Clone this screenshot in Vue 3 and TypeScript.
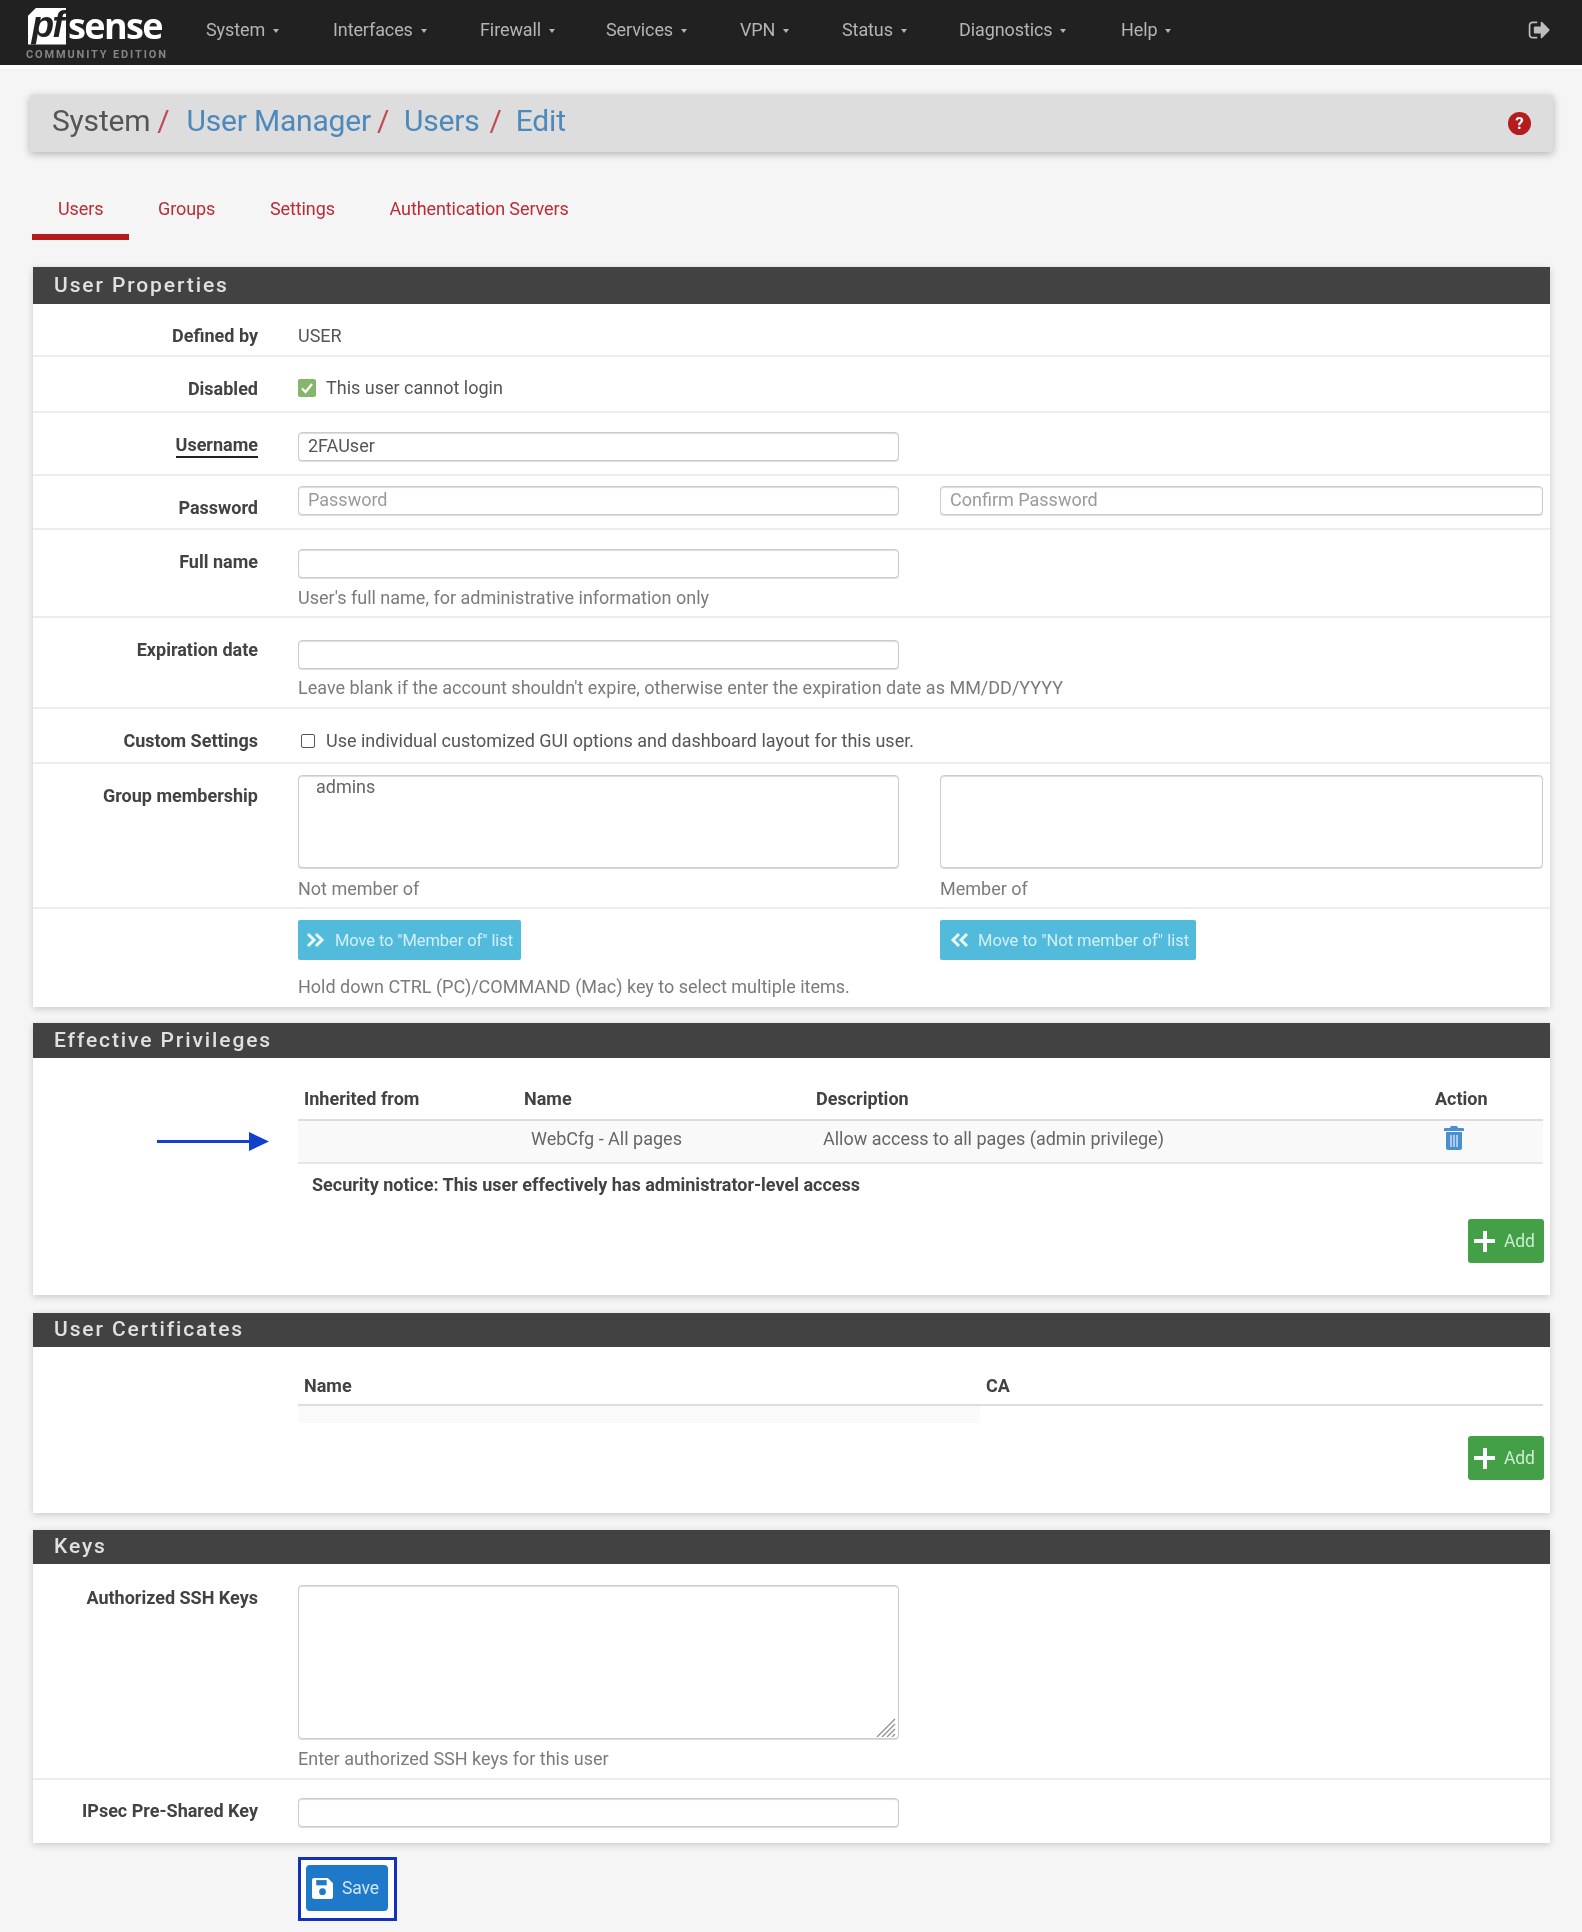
<script setup lang="ts">
const navItems: { label: string; width: number }[] = [
  { label: 'System', width: 127 },
  { label: 'Interfaces', width: 147 },
  { label: 'Firewall', width: 126 },
  { label: 'Services', width: 134 },
  { label: 'VPN', width: 102 },
  { label: 'Status', width: 117 },
  { label: 'Diagnostics', width: 162 },
  { label: 'Help', width: 80 },
]
const tabs = ['Users', 'Groups', 'Settings', 'Authentication Servers']
</script>

<template>
  <div class="page">
    <nav class="nav">
      <div class="brand">
        <div class="logo-row">
          <span class="pf">pf</span><span class="sense">sense</span>
        </div>
        <div class="edition">COMMUNITY EDITION</div>
      </div>
      <ul class="menu">
        <li v-for="item in navItems" :key="item.label" :style="{ width: item.width + 'px' }">
          {{ item.label }}<i class="caret"></i>
        </li>
      </ul>
      <svg class="logout" viewBox="0 0 1664 1792" aria-label="Logout">
        <path fill="#bdbdbd" d="M704 1440q0 4 1 20t.5 26.5-3 23.5-10 19.5-20.5 6.5h-320q-119 0-203.5-84.5t-84.5-203.5v-704q0-119 84.5-203.5t203.5-84.5h320q13 0 22.5 9.5t9.5 22.5q0 4 1 20t.5 26.5-3 23.5-10 19.5-20.5 6.5h-320q-66 0-113 47t-47 113v704q0 66 47 113t113 47h312l11.5 1 11.5 3 8 5.5 7 9 2 13.5zm928-544q0 26-19 45l-544 544q-19 19-45 19t-45-19-19-45v-288h-448q-26 0-45-19t-19-45v-384q0-26 19-45t45-19h448v-288q0-26 19-45t45-19 45 19l544 544q19 19 19 45z"/>
      </svg>
    </nav>

    <header class="crumbs">
      <span class="c-root">System</span><span class="c-sep c-sep-a">/</span>
      <a class="c-link">User Manager</a><span class="c-sep c-sep-b">/</span>
      <a class="c-link">Users</a><span class="c-sep c-sep-c">/</span>
      <a class="c-link">Edit</a>
      <span class="help-dot">?</span>
    </header>

    <div class="tabs">
      <a v-for="(t, i) in tabs" :key="t" class="tab" :class="{ active: i === 0 }">{{ t }}</a>
    </div>

    <section class="panel">
      <h2 class="panel-title first">User Properties</h2>
      <div class="row h53">
        <label class="lbl">Defined by</label>
        <div class="val pt-22">USER</div>
      </div>
      <div class="row h56">
        <label class="lbl">Disabled</label>
        <div class="check-line pt-21">
          <svg class="green-check" viewBox="0 0 18 18">
            <rect width="18" height="18" rx="2" fill="#86b66e"/>
            <path d="M4 9.5l3.5 3.5L14 5" fill="none" stroke="#fff" stroke-width="2.2"/>
          </svg>
          <span>This user cannot login</span>
        </div>
      </div>
      <div class="row h63">
        <label class="lbl"><span class="req">Username</span></label>
        <div class="pt-19"><input class="ctl" value="2FAUser" /></div>
      </div>
      <div class="row h54">
        <label class="lbl">Password</label>
        <div class="pt-10"><input class="ctl" placeholder="Password" /></div>
        <div class="pt-10 col2"><input class="ctl" placeholder="Confirm Password" /></div>
      </div>
      <div class="row h88">
        <label class="lbl">Full name</label>
        <div class="pt-19">
          <input class="ctl" />
          <p class="help m10">User's full name, for administrative information only</p>
        </div>
      </div>
      <div class="row h91">
        <label class="lbl">Expiration date</label>
        <div class="pt-22 span2">
          <input class="ctl ctl-narrow" />
          <p class="help m9">Leave blank if the account shouldn't expire, otherwise enter the expiration date as MM/DD/YYYY</p>
        </div>
      </div>
      <div class="row h55">
        <label class="lbl">Custom Settings</label>
        <div class="check-line pt-22 span2">
          <span class="empty-check"></span>
          <span>Use individual customized GUI options and dashboard layout for this user.</span>
        </div>
      </div>
      <div class="row h145">
        <label class="lbl">Group membership</label>
        <div class="pt-11">
          <select class="ctl list" multiple><option>admins</option></select>
          <p class="help m11">Not member of</p>
        </div>
        <div class="pt-11 col2">
          <select class="ctl list" multiple></select>
          <p class="help m11">Member of</p>
        </div>
      </div>
      <div class="row h98 last">
        <span></span>
        <div class="pt-11 btn-cell">
          <button class="btn info move-a" type="button">
            <svg class="chev" viewBox="0 0 20 16"><path d="M2 2l6 6-6 6M10 2l6 6-6 6" fill="none" stroke="#e8f7fb" stroke-width="3"/></svg>
            Move to "Member of" list
          </button>
        </div>
        <div class="pt-11 col2 btn-cell">
          <button class="btn info move-b" type="button">
            <svg class="chev" viewBox="0 0 20 16"><path d="M10 2L4 8l6 6M18 2l-6 6 6 6" fill="none" stroke="#e8f7fb" stroke-width="3"/></svg>
            Move to "Not member of" list
          </button>
        </div>
        <span></span>
        <p class="help hold span2">Hold down CTRL (PC)/COMMAND (Mac) key to select multiple items.</p>
      </div>
    </section>

    <section class="panel gap16">
      <h2 class="panel-title">Effective Privileges</h2>
      <div class="tbl-wrap priv">
        <svg class="arrow" viewBox="0 0 112 20">
          <rect x="0" y="8" width="94" height="3" fill="#1240cc"/>
          <path d="M92 0l20 9.5-20 9.5z" fill="#1240cc"/>
        </svg>
        <table class="tbl">
          <colgroup><col class="c1" /><col class="c2" /><col class="c3" /><col class="c4" /></colgroup>
          <thead>
            <tr><th>Inherited from</th><th>Name</th><th>Description</th><th>Action</th></tr>
          </thead>
          <tbody>
            <tr>
              <td></td>
              <td>WebCfg - All pages</td>
              <td>Allow access to all pages (admin privilege)</td>
              <td class="act">
                <svg class="trash" viewBox="0 0 20 24">
                  <path fill="#4a8fd0" d="M7 0h6l1 2h5a1 1 0 011 1v2H0V3a1 1 0 011-1h5zM2 6h16v16a2 2 0 01-2 2H4a2 2 0 01-2-2z"/>
                  <path stroke="#d5e5f5" stroke-width="1.4" d="M7 9v12M10 9v12M13 9v12"/>
                </svg>
              </td>
            </tr>
          </tbody>
        </table>
        <p class="notice">Security notice: This user effectively has administrator-level access</p>
        <div class="add-line add-a">
          <button class="btn add" type="button"><span class="plus"></span>Add</button>
        </div>
      </div>
    </section>

    <section class="panel gap18">
      <h2 class="panel-title short">User Certificates</h2>
      <div class="tbl-wrap cert">
        <table class="tbl">
          <colgroup><col class="cc1" /><col /></colgroup>
          <thead><tr><th>Name</th><th>CA</th></tr></thead>
        </table>
        <div class="strip"></div>
        <div class="add-line add-b">
          <button class="btn add" type="button"><span class="plus"></span>Add</button>
        </div>
      </div>
    </section>

    <section class="panel gap17">
      <h2 class="panel-title short">Keys</h2>
      <div class="row h216">
        <label class="lbl lbl-down">Authorized SSH Keys</label>
        <div class="pt-21">
          <div class="area-wrap">
            <textarea class="ctl area"></textarea>
            <svg class="grip" viewBox="0 0 20 20">
              <path d="M1 20L19 2M6 20L19 7M11 20l8-8M16 20l3-3" stroke="#8f8f8f" stroke-width="1.3" fill="none"/>
            </svg>
          </div>
          <p class="help m10">Enter authorized SSH keys for this user</p>
        </div>
      </div>
      <div class="row h63 last">
        <label class="lbl lbl-up">IPsec Pre-Shared Key</label>
        <div class="pt-18"><input class="ctl" /></div>
      </div>
    </section>

    <div class="save-wrap">
      <div class="save-mark">
        <button class="btn save" type="button">
          <svg class="floppy" viewBox="0 0 20 20">
            <path fill="#fff" d="M2 0h13l5 5v13a2 2 0 01-2 2H2a2 2 0 01-2-2V2a2 2 0 012-2z"/>
            <rect x="4" y="2" width="10" height="5" fill="#1e79c8"/>
            <circle cx="10" cy="13" r="3.2" fill="#1e79c8"/>
          </svg>
          Save
        </button>
      </div>
    </div>
  </div>
</template>

<style>
html, body { margin: 0; background: #f5f5f5; }
</style>

<style scoped>
.page {
  width: 1582px;
  min-height: 1932px;
  box-sizing: border-box;
  background: #f5f5f5;
  font-family: Roboto, "Liberation Sans", sans-serif;
  color: #555;
  overflow: hidden;
  filter: blur(0.5px);
}

/* nav */
.nav {
  display: flex;
  align-items: center;
  height: 65px;
  background: #212121;
  border-top: 1px solid #333;
  border-bottom: 4px solid #fff;
  box-sizing: content-box;
  margin-top: -1px;
}
.brand { width: 180px; margin-left: 26px; flex: none; }
.logo-row { display: flex; align-items: center; height: 38px; margin-top: 3px; }
.pf {
  display: block;
  width: 38px;
  height: 37px;
  margin-left: 2px;
  background: #fff;
  clip-path: polygon(22% 0, 100% 0, 100% 100%, 0 100%, 0 22%);
  color: #212121;
  font: italic 700 37px/34px "Liberation Sans", sans-serif;
  letter-spacing: -2px;
  text-align: center;
}
.sense {
  margin-left: 2px;
  color: #fff;
  font: 700 36px/38px "Open Sans", sans-serif;
  letter-spacing: -1.6px;
}
.edition {
  margin-top: 3px;
  color: #858585;
  font: 700 11px/13px Roboto, sans-serif;
  letter-spacing: 1.85px;
  white-space: nowrap;
}
.menu {
  display: flex;
  list-style: none;
  margin: 0;
  padding: 0;
  flex: 1;
  color: #b4b4b4;
  font-size: 18px;
  letter-spacing: -0.1px;
}
.menu li { flex: none; white-space: nowrap; margin-top: -7px; }
.caret {
  display: inline-block;
  margin-left: 8px;
  vertical-align: middle;
  border-top: 4px solid #b4b4b4;
  border-left: 3.5px solid transparent;
  border-right: 3.5px solid transparent;
}
.logout { width: 24px; height: 24px; margin-right: 31px; margin-top: -6px; flex: none; }

/* breadcrumb */
.crumbs {
  display: flex;
  align-items: center;
  height: 57px;
  margin: 26px 29px 0 30px;
  padding-left: 22px;
  padding-bottom: 6px;
  box-sizing: border-box;
  background: #ddd;
  box-shadow: 0 2px 8px rgba(0, 0, 0, 0.28);
  font-size: 30px;
  letter-spacing: -0.2px;
  color: #555;
}
.c-link { color: #4d89bb; }
.c-sep { color: #c24a55; }
.c-sep-a { margin: 0 17px 0 7px; }
.c-sep-b { margin: 0 15px 0 6px; }
.c-sep-c { margin: 0 14px 0 10px; }
.help-dot {
  width: 23px;
  height: 23px;
  margin-left: auto;
  margin-right: 22px;
  margin-top: 6px;
  border-radius: 50%;
  background: #b71c1c;
  color: #fff;
  font: 700 17px/23px Roboto, sans-serif;
  text-align: center;
  letter-spacing: 0;
}

/* tabs */
.tabs { display: flex; gap: 2.7px; margin: 38px 0 0 32px; height: 50px; }
.tab {
  box-sizing: border-box;
  height: 50px;
  padding: 9px 26px 0;
  color: #bb2c36;
  font-size: 18px;
  line-height: 20px;
  letter-spacing: -0.1px;
}
.tab.active { border-bottom: 6px solid #b71c1c; }

/* panels */
.panel {
  margin: 27px 32px 0 33px;
  background: #fff;
  box-shadow: 0 2px 7px rgba(0, 0, 0, 0.18);
}
.gap16 { margin-top: 16px; }
.gap18 { margin-top: 18px; }
.gap17 { margin-top: 17px; }
.panel-title {
  box-sizing: border-box;
  height: 35px;
  margin: 0;
  padding-left: 21px;
  background: #424242;
  color: #e0e0e0;
  font-size: 21px;
  font-weight: 500;
  line-height: 35px;
  letter-spacing: 1.9px;
}
.panel-title.first { height: 37px; line-height: 37px; }
.panel-title.short { height: 34px; line-height: 33px; }

/* rows */
.row {
  display: grid;
  grid-template-columns: 225px 601px 1fr;
  column-gap: 40px;
  padding-right: 7px;
  box-sizing: border-box;
  border-bottom: 2px solid #ececec;
  align-items: start;
  align-content: start;
}
.row.last { border-bottom: 0; }
.h53 { height: 53px; } .h56 { height: 56px; } .h63 { height: 63px; } .h54 { height: 54px; }
.h88 { height: 88px; } .h91 { height: 91px; } .h55 { height: 55px; } .h145 { height: 145px; }
.h98 { height: 98px; } .h216 { height: 216px; }
.pt-10 { padding-top: 10px; } .pt-11 { padding-top: 11px; } .pt-18 { padding-top: 18px; }
.pt-19 { padding-top: 19px; } .pt-21 { padding-top: 21px; } .pt-22 { padding-top: 22px; }
.col2 { margin-left: 1px; }
.span2 { grid-column: 2 / 4; }
.btn-cell { display: flex; }
.lbl {
  display: block;
  padding-top: 22px;
  text-align: right;
  color: #424242;
  font-size: 18px;
  font-weight: 700;
  line-height: 20px;
  white-space: nowrap;
}
.lbl-down { padding-top: 24px; }
.lbl-up { padding-top: 21px; }
.req { display: inline-block; height: 21px; border-bottom: 2px solid #222; }
.val, .check-line {
  color: #555;
  font-size: 18px;
  line-height: 20px;
}
.check-line { display: flex; align-items: center; }
.green-check { width: 18px; height: 18px; margin-right: 10px; flex: none; }
.empty-check {
  box-sizing: border-box;
  width: 14px;
  height: 14px;
  margin: 0 11px 0 3px;
  border: 1px solid #555;
  border-radius: 2px;
  background: #fff;
  flex: none;
}
.ctl {
  display: block;
  box-sizing: border-box;
  width: 100%;
  height: 29px;
  padding: 0 9px 2px;
  border: 1px solid #ccc;
  border-radius: 4px;
  outline: 0;
  background: #fff;
  box-shadow: inset 0 1px 1px rgba(0, 0, 0, 0.14), 0 1px 0 #ddd;
  color: #555;
  font-family: Roboto, "Liberation Sans", sans-serif;
  font-size: 18px;
}
.ctl::placeholder { color: #9a9a9a; opacity: 1; }
.ctl-narrow { width: 601px; }
.list { height: 93px; padding: 0 0 0 4px; overflow: hidden; }
.list option { padding: 0 13px; color: #666; }
.area-wrap { position: relative; }
.area { height: 154px; padding: 6px 10px; resize: none; }
.grip { position: absolute; right: 3px; bottom: 2px; width: 20px; height: 20px; }
.help {
  margin: 0;
  color: #7b7b7b;
  font-size: 18px;
  line-height: 20px;
  white-space: nowrap;
}
.m9 { margin-top: 9px; } .m10 { margin-top: 10px; } .m11 { margin-top: 11px; }
.hold { margin-top: 17px; }

/* buttons */
.btn {
  display: inline-flex;
  align-items: center;
  box-sizing: border-box;
  border: 0;
  color: #d2f0f8;
  font-family: Roboto, "Liberation Sans", sans-serif;
  font-size: 16.5px;
  letter-spacing: -0.1px;
  padding: 0;
  white-space: nowrap;
}
.info { height: 40px; background: #52bbdb; border-radius: 2px; }
.move-a { width: 223px; padding-left: 8px; }
.move-b { width: 256px; padding-left: 9px; letter-spacing: 0; }
.chev { width: 20px; height: 16px; margin-right: 9px; flex: none; }
.add-line { display: flex; justify-content: flex-end; padding-right: 6px; }
.add {
  width: 76px;
  height: 44px;
  padding-left: 6px;
  border-radius: 3px;
  background: #43a047;
  color: #cdeccf;
  font-size: 17.5px;
}
.plus {
  position: relative;
  width: 21px;
  height: 21px;
  margin-right: 9px;
  flex: none;
  background:
    linear-gradient(#fff, #fff) center / 21px 4px no-repeat,
    linear-gradient(#fff, #fff) center / 4px 21px no-repeat;
}

/* tables */
.tbl-wrap { position: relative; padding: 0 0 0 265px; }
.priv { height: 237px; padding-top: 31px; box-sizing: border-box; }
.cert { height: 166px; padding-top: 29px; box-sizing: border-box; }
.tbl {
  width: 1245px;
  table-layout: fixed;
  border-collapse: collapse;
  font-size: 18px;
}
.c1 { width: 219px; } .c2 { width: 292px; } .c3 { width: 619px; }
.cc1 { width: 681px; }
.tbl th {
  height: 30px;
  padding: 0 0 0 7px;
  border-bottom: 2px solid #ddd;
  color: #424242;
  font-weight: 700;
  text-align: left;
  line-height: 20px;
  vertical-align: top;
}
.tbl th:first-child { padding-left: 6px; }
.cert .tbl th { height: 28px; }
.tbl td {
  height: 34px;
  padding: 0 0 7px 14px;
  border-bottom: 2px solid #e6e6e6;
  background: #f9f9f9;
  color: #666;
}
.tbl td.act { padding-left: 16px; }
.trash { display: block; width: 20px; height: 24px; }
.notice {
  margin: 11px 0 0 14px;
  color: #424242;
  font-size: 18px;
  font-weight: 700;
  line-height: 20px;
}
.add-a { margin-top: 24px; }
.add-b { margin-top: 13px; }
.strip { width: 682px; height: 17px; background: #fafafa; }
.arrow { position: absolute; left: 124px; top: 74px; width: 112px; height: 20px; }

/* save */
.save-wrap { margin: 14px 0 11px 298px; }
.save-mark {
  display: inline-block;
  padding: 5px 6px 7px 5px;
  border: 3px solid #1232bd;
  background: #fff;
  line-height: 0;
}
.save {
  width: 82px;
  height: 46px;
  padding-left: 6px;
  border-radius: 4px;
  background: #1e79c8;
  color: #cfe6fa;
  font-size: 17.5px;
}
.floppy { width: 21px; height: 21px; margin-right: 9px; flex: none; }
</style>
